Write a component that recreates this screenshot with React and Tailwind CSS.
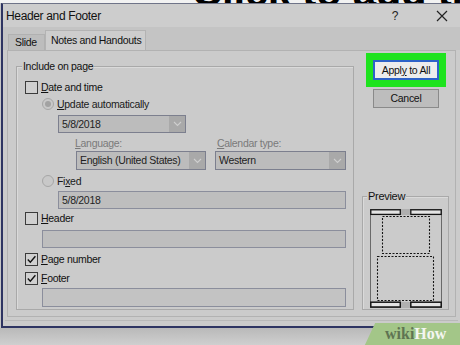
import React from "react";

const Chevron = () => (
  <svg width="9" height="6" viewBox="0 0 9 6">
    <path d="M1 1 L4.5 4.5 L8 1" fill="none" stroke="#cfcfcf" strokeWidth="1.1" />
  </svg>
);

const Tick = () => (
  <svg width="11" height="11" viewBox="0 0 11 11">
    <path d="M1.8 5.6 L4.3 8.2 L9.4 2.2" fill="none" stroke="#111" strokeWidth="1.4" />
  </svg>
);

const U = ({ children }) => <span className="underline underline-offset-[1px]">{children}</span>;

const Check = ({ checked, children }) => (
  <div className="flex h-[14px] items-center pl-[8px]">
    <span className="flex h-[13px] w-[13px] items-center justify-center border border-[#3b3b3b] bg-[#d0d0d0]">
      {checked && <Tick />}
    </span>
    <span className="ml-[3px]">{children}</span>
  </div>
);

const Radio = ({ on, children }) => (
  <div className="flex h-[14px] items-center pl-[25px] text-[#1a1a1a]">
    <span className="flex h-[12px] w-[12px] items-center justify-center rounded-full border border-[#a6a6a6] bg-[#c8c8c8]">
      {on && <span className="h-[6px] w-[6px] rounded-full bg-[#a2a2a2]" />}
    </span>
    <span className="ml-[3px]">{children}</span>
  </div>
);

const Dropdown = ({ w, h, text }) => (
  <div className={`flex border border-[#7c7f8e] bg-[#bcbcbc] ${w} ${h}`}>
    <div className="flex flex-1 items-center pl-[3px] text-[#1e1e1e]">{text}</div>
    <div className="flex w-[16px] items-center justify-center bg-[#a9a9a9]">
      <Chevron />
    </div>
  </div>
);

const Field = ({ className, text }) => (
  <div className={`flex items-center border border-[#8b8e9c] bg-[#bebebe] pl-[3px] text-[#1e1e1e] ${className}`}>
    {text}
  </div>
);

const PreviewPage = () => (
  <svg width="72" height="99" viewBox="0 0 72 99">
    <rect x="0.5" y="0.5" width="71" height="98" fill="#cbcbcb" stroke="#6a6a6a" strokeWidth="1" />
    <rect x="0.8" y="0.8" width="29.5" height="4.6" fill="#e4e4e4" stroke="#151515" strokeWidth="1.3" />
    <rect x="40.8" y="0.8" width="30.4" height="4.6" fill="#e4e4e4" stroke="#151515" strokeWidth="1.3" />
    <rect x="31" y="0" width="9" height="6" fill="#b0b0b0" />
    <rect x="12.5" y="7.5" width="47" height="37" fill="none" stroke="#151515" strokeWidth="1.1" strokeDasharray="2 1.5" />
    <rect x="7.5" y="47.5" width="56" height="44" fill="none" stroke="#151515" strokeWidth="1.1" strokeDasharray="2 1.5" />
    <rect x="0.8" y="93.2" width="29.5" height="4.8" fill="#e4e4e4" stroke="#151515" strokeWidth="1.5" />
    <rect x="40.8" y="93.2" width="30.4" height="4.8" fill="#e4e4e4" stroke="#151515" strokeWidth="1.5" />
    <rect x="31" y="93" width="9" height="6" fill="#b0b0b0" />
  </svg>
);

export default function App() {
  return (
    <div className="relative h-[345px] w-[460px] overflow-hidden bg-[#c6c6c6] font-['Liberation_Sans',Arial,sans-serif] text-[10.5px] leading-none tracking-[-0.3px] text-[#111]">
      <div className="h-[3px] overflow-hidden bg-[#f2f2f2] pl-[192px]">
        <div className="-mt-[29px] whitespace-nowrap text-[42px] font-bold leading-none text-black">Click to add title</div>
      </div>

      <div className="ml-[1px] flex h-[325px] flex-col border-b-2 border-l-2 border-t border-[#2e3462] border-t-[#6f7488] bg-[#cbcbcb]">
        <div className="flex h-[23px] items-center bg-[#cdcdcd] pl-[3px] pr-[12px]">
          <span className="text-[12px] tracking-[-0.35px]">Header and Footer</span>
          <span className="ml-auto text-[12px] text-[#222]">?</span>
          <svg className="ml-[38px]" width="12" height="12" viewBox="0 0 12 12">
            <path d="M1 1 L11 11 M11 1 L1 11" stroke="#222" strokeWidth="1.2" />
          </svg>
        </div>

        <div className="flex h-[23px] items-end bg-[#c4c4c4] pl-[5px]">
          <div className="flex h-[16px] w-[37px] items-center border border-b-0 border-[#b1b1b1] bg-[#bdbdbd] pl-[6px]">Slide</div>
          <div className="flex h-[20px] w-[101px] items-center border border-b-0 border-[#b3b3b3] bg-[#cdcdcd] pl-[5px]">Notes and Handouts</div>
        </div>

        <div className="mx-[4px] flex h-[267px] border border-[#b2b2b2] bg-[#cbcbcb]">
          <div className="relative ml-[8px] mt-[15px] flex h-[244px] w-[338px] flex-col border border-[#a9a9a9] pb-[2px] pt-[13px] shadow-[inset_1px_1px_0_#dadada]">
            <span className="absolute -top-[6px] left-[5px] bg-[#cbcbcb] px-[1px]">Include on page</span>
            <Check>
              <U>D</U>ate and time
            </Check>
            <div className="mt-[3px]">
              <Radio on>
                <U>U</U>pdate automatically
              </Radio>
            </div>
            <div className="mt-[4px] pl-[41px]">
              <Dropdown w="w-[128px]" h="h-[18px]" text="5/8/2018" />
            </div>
            <div className="mt-[3px] flex h-[14px] items-center text-[#7a7a7a]">
              <span className="ml-[58px]">
                <U>L</U>anguage:
              </span>
              <span className="ml-[95px]">
                <U>C</U>alendar type:
              </span>
            </div>
            <div className="mt-[1px] flex pl-[59px]">
              <Dropdown w="w-[130px]" h="h-[19px]" text="English (United States)" />
              <div className="ml-[9px]">
                <Dropdown w="w-[131px]" h="h-[19px]" text="Western" />
              </div>
            </div>
            <div className="mt-[4px]">
              <Radio>
                Fi<U>x</U>ed
              </Radio>
            </div>
            <div className="mt-[3px] pl-[41px]">
              <Field className="h-[18px] w-[288px]" text="5/8/2018" />
            </div>
            <div className="mt-[2px]">
              <Check>
                <U>H</U>eader
              </Check>
            </div>
            <div className="mt-[5px] pl-[25px]">
              <Field className="h-[18px] w-[304px]" text="" />
            </div>
            <div className="mt-[4px]">
              <Check checked>
                <U>P</U>age number
              </Check>
            </div>
            <div className="mt-[5px]">
              <Check checked>
                <U>F</U>ooter
              </Check>
            </div>
            <div className="mt-[3px] pl-[25px]">
              <Field className="h-[19px] w-[304px] bg-[#c3c3c3]" text="" />
            </div>
          </div>

          <div className="ml-[8px] flex w-[87px] flex-col">
            <div className="ml-[4px] mt-[2px] flex h-[34px] w-[80px] items-center justify-center bg-[#1ee31e]">
              <div className="flex h-[20px] w-[66px] items-center justify-center border-2 border-[#2d62c8] bg-[#ececec] text-[#111]">
                Appl<U>y</U>&nbsp;to All
              </div>
            </div>
            <div className="ml-[11px] mt-[2px] flex h-[19px] w-[66px] items-center justify-center border border-[#8a8a8a] bg-[#bdbdbd]">
              Cancel
            </div>
            <div className="relative mt-[88px] flex h-[114px] w-[87px] flex-col border border-[#a9a9a9] pl-[7px] pt-[12px] shadow-[inset_1px_1px_0_#dadada]">
              <span className="absolute -top-[6px] left-[4px] bg-[#cbcbcb] px-[1px] text-[11px]">Preview</span>
              <PreviewPage />
            </div>
          </div>
        </div>
        <div className="mx-[2px] mt-[3px] border-t border-[#b9b9b9]" />
      </div>

      <div className="h-[17px] bg-gradient-to-b from-[#b9b9b9] to-[#cfcfcf]" />

      <div className="absolute bottom-0 right-[-6px] flex h-[22px] w-[96px] skew-x-[-25deg] items-center justify-center bg-[#a3c688] pr-[4px]">
        <span className="skew-x-[25deg] font-['Liberation_Serif',serif] text-[16px] font-bold tracking-[0px]">
          <span className="text-[#5f7452]">wiki</span>
          <span className="text-[#f4f6f1]">How</span>
        </span>
      </div>
    </div>
  );
}
